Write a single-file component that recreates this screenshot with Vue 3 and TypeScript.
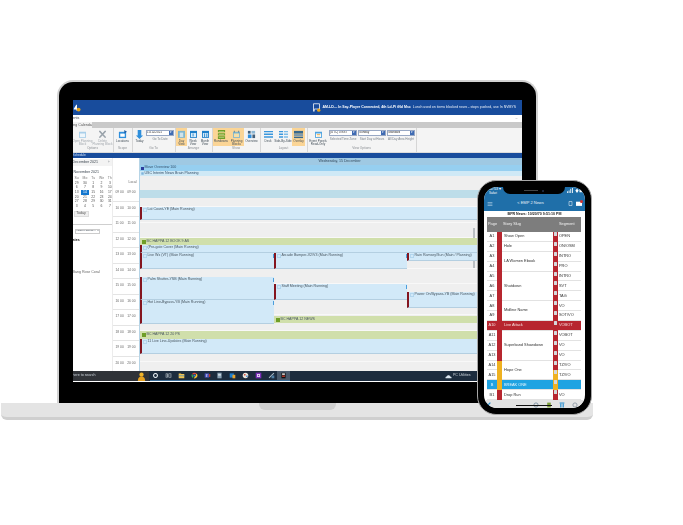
<template>
  <div class="stage">
    <div class="laptop">
      <div class="lid">
        <div class="screen">
          <header class="topbar">
            <span class="logo">
              <svg viewBox="0 0 10 10" width="8" height="8"><path d="M1 6 4 1h1v5h1v1H5v1H4V7H1z" fill="#fff" /><circle cx="7" cy="7" r="2.4" fill="#e8a417" /></svg>
            </span>
            <span class="notice">
              <svg viewBox="0 0 12 12" width="9" height="9"><path d="M2 1h8v7H3v3H2z" fill="none" stroke="#fff" stroke-width="1" /><circle cx="9" cy="9.5" r="2.2" fill="#e8a417" /></svg>
              <b>AM-LD— In Say-Player Connected, 4th Ld-Pi tNd Msc</b>
              <span>Lunch used on items blocked news - stops pushed, use In NVMYS</span>
            </span>
          </header>
          <div class="menubar"><span>ents</span><i>–</i></div>
          <div class="tabs"><span class="tab">ing Calendar</span></div>
          <div class="ribbon">
            <section v-for="g in ribbon" :key="g.label" class="group" :style="{ width: g.width + 'px' }">
              <div class="tools">
                <div v-for="t in g.tools" :key="t.label" class="tool" :class="{ on: t.on, off: t.off }" :style="{ width: t.width + 'px' }">
                  <svg viewBox="0 0 10 10" width="9" height="9"><path v-for="(p, i) in icons[t.icon]" :key="i" :d="p[0]" :fill="p[1]" /></svg>
                  <span>{{ t.label }}</span>
                </div>
                <div v-if="g.goto" class="goto">
                  <div class="pick"><span>15/12/2021</span><i>▾</i></div>
                  <span>Go To Date</span>
                </div>
                <template v-if="g.views">
                  <div v-for="v in viewOptions" :key="v.label" class="goto wide">
                    <div class="pick"><span>{{ v.value }}</span><i>▾</i></div>
                    <span>{{ v.label }}</span>
                  </div>
                </template>
              </div>
              <small>{{ g.label }}</small>
            </section>
          </div>
          <div class="bluebar"><span>Schedule</span></div>

          <div class="body">
            <aside class="side">
              <div class="side-title"><span>December 2021</span><i>›</i></div>
              <div class="month-name">November 2021</div>
              <div class="month">
                <span v-for="d in weekdays" :key="d" class="wd">{{ d }}</span>
                <span v-for="(d, i) in days" :key="i" :class="{ today: d === 14 }">{{ d }}</span>
              </div>
              <button class="today-btn">Today</button>
              <div class="side-line"></div>
              <div class="select"><span>main/Nova...</span><i>▾</i></div>
              <b class="side-head">ates</b>
              <span class="side-note">Bang Rose Coral</span>
            </aside>

            <div class="times">
              <div class="local">Local</div>
              <div v-for="h in hours" :key="h" class="hour"><span>{{ h }}</span><span>{{ h }}</span></div>
            </div>

            <div class="day">
              <div class="day-head">Wednesday, 15 December</div>
              <div class="allday a"><em></em>Move Overview 100</div>
              <div class="allday b"><svg viewBox="0 0 10 10" width="3" height="3"><path d="M1 1h8v8H1z" fill="#7fb4dc" /></svg>USC Interim News Brain Planning</div>
              <div class="slots">
                <div class="band" style="grid-row: 15 / 23"></div>
                <div
                  v-for="e in events"
                  :key="e.text"
                  class="event"
                  :class="{ green: e.green }"
                  :style="{ gridRow: `${e.top - 175} / ${e.bottom - 175}`, gridColumn: `${e.col} / ${e.end}` }"
                >
                  <svg v-if="e.green" viewBox="0 0 10 10" width="4" height="4"><path d="M0 0h10v10H0z" fill="#6f9e27" /></svg>
                  <svg v-else viewBox="0 0 10 10" width="4" height="4"><path d="M1 1h8v8H1z" fill="none" stroke="#7fb4dc" /></svg>
                  <span>{{ e.text }}</span>
                  <i v-if="e.flag" class="flag"></i>
                </div>
                <div v-for="m in marks" :key="m[0]" class="mark" :style="{ gridRow: `${m[0] - 175} / ${m[1] - 175}` }"></div>
              </div>
            </div>
          </div>

          <footer class="taskbar">
            <div class="search">
              <span>here to search</span>
              <svg viewBox="0 0 10 10" width="9" height="9"><circle cx="5" cy="3" r="2.4" fill="#f0b429" /><path d="M1 10c0-4 2-5 4-5s4 1 4 5z" fill="#e6a11f" /></svg>
            </div>
            <div class="task-icons">
              <span v-for="t in taskIcons" :key="t.key" class="task" :class="{ active: t.active }">
                <svg viewBox="0 0 10 10" width="7" height="7"><path v-for="(p, i) in t.paths" :key="i" :d="p[0]" :fill="p[1]" /></svg>
              </span>
            </div>
            <div class="tray">
              <svg viewBox="0 0 12 8" width="7" height="5"><path d="M1 7c-1-2 1-3 2-3 1-3 5-3 6 0 2 0 3 2 2 3z" fill="#dbe6f0" /></svg>
              <span>PC Utilities</span>
            </div>
          </footer>
        </div>
      </div>
      <div class="base"><div class="lip"></div></div>
    </div>

    <div class="phone">
      <div class="phone-screen">
        <div class="notch"><i></i><b></b></div>
        <div class="status">
          <div><span>12:53 ▾</span><small>Safari</small></div>
          <svg viewBox="0 0 18 6" width="15" height="5"><path d="M0 4h1v2H0zM2 3h1v3H2zM4 1h1v5H4zM6 0h1v6H6z" fill="#fff" /><path d="M10 3l2-2 2 2-2 3z" fill="#fff" /><path d="M15 1h3v4h-3z" fill="#fff" /></svg>
        </div>
        <div class="phone-nav">
          <svg viewBox="0 0 10 10" width="6" height="6"><path d="M1 2h8v1H1zM1 4.500h8v1H1zM1 7h8v1H1z" fill="#cfe3f2" /></svg>
          <span>&lt; EMP 2 News</span>
          <svg viewBox="0 0 10 10" width="5" height="5"><path d="M2 1h6v8H2z" fill="none" stroke="#fff" /></svg>
          <span class="mail">
            <svg viewBox="0 0 10 8" width="6" height="5"><path d="M0 1h10v7H0z" fill="#fff" /></svg>
            <i></i>
          </span>
        </div>
        <div class="stamp">BPR News: 10/20/70 9:51:10 PM</div>
        <div class="rundown">
          <div class="th">Page</div>
          <div class="th story-head">Story Slug</div>
          <div class="th seg-head">Segment</div>
          <template v-for="r in rows" :key="r.page">
            <div class="cell page" :class="r.tone">{{ r.page }}</div>
            <template v-if="r.story !== undefined">
              <div class="cell bar" :class="[r.tone, r.bar]" :style="r.storySpan ? { gridRow: 'span ' + r.storySpan } : undefined"></div>
              <div class="cell story" :class="r.tone" :style="r.storySpan ? { gridRow: 'span ' + r.storySpan } : undefined">{{ r.story }}</div>
            </template>
            <div class="cell bar second" :class="[r.tone, r.bar2]"><i></i></div>
            <div class="cell seg" :class="r.tone">{{ r.seg }}</div>
          </template>
        </div>
        <div class="phone-tools">
          <svg viewBox="0 0 10 10" width="6" height="6"><path d="M1 1l8 8M9 1l-8 8" stroke="#2a8fd0" stroke-width="2" /></svg>
          <span class="home"></span>
          <svg viewBox="0 0 10 10" width="6" height="6"><circle cx="5" cy="5" r="3.500" fill="none" stroke="#7b8fa0" stroke-width="1.500" /></svg>
          <svg viewBox="0 0 10 10" width="6" height="6"><path d="M2 1h6v8H2z" fill="#7da03a" /></svg>
          <svg viewBox="0 0 10 10" width="6" height="6"><path d="M1 1h8v1.500H1zM2 3h2v6H2zM6 3h2v6H6z" fill="#2a8fd0" /></svg>
          <svg viewBox="0 0 10 10" width="6" height="6"><circle cx="5" cy="5" r="3.500" fill="none" stroke="#8d9aa5" stroke-width="1.500" /></svg>
        </div>
      </div>
    </div>
  </div>
</template>

<script setup lang="ts">
type Path = [string, string]

interface Tool {
  label: string
  icon: string
  width: number
  on?: boolean
  off?: boolean
}

interface RibbonGroup {
  label: string
  width: number
  tools: Tool[]
  goto?: boolean
  views?: boolean
}

interface CalEvent {
  text: string
  top: number
  bottom: number
  col: number
  end: number
  green?: boolean
  flag?: boolean
}

interface Row {
  page: string
  story?: string
  storySpan?: number
  seg: string
  tone?: string
  bar?: string
  bar2?: string
}

const icons: Record<string, Path[]> = {
  cal: [['M1 2h8v7H1z', '#4ea3e0'], ['M2 4h6v4H2z', '#fff'], ['M2 1h1v2H2zM7 1h1v2H7z', '#1d5fa8']],
  calOff: [['M1 2h8v7H1z', '#a9cfe9'], ['M2 4h6v4H2z', '#eef6fb']],
  cross: [['M1 1h1.500L9 8v1H7.500L1 2zM9 1v1L2.500 9H1V8L7.500 1z', '#9aa3ab']],
  loc: [['M1 2h8v7H1z', '#2f8fdc'], ['M2.500 4h5v3.500h-5z', '#fff'], ['M7 0l3 2-3 2z', '#1d5fa8']],
  today: [['M3 0h4v6h2L5 10 1 6h2z', '#2f8fdc']],
  dayView: [['M1 1h8v8H1z', '#7fb6cf'], ['M3 3h4v5H3z', '#cfe3ea']],
  weekView: [['M1 1h8v8H1z', '#1e7fc9'], ['M2 3.500h6V8H2z', '#d9eefb'], ['M4 4h1v3.500H4z', '#1e7fc9']],
  monthView: [['M1 1h8v8H1z', '#1e7fc9'], ['M2 3.500h6V8H2z', '#d9eefb'], ['M3.500 4h1v4h-1zM6 4h1v4H6z', '#1e7fc9']],
  rundown: [['M1 0h8v2.500H1zM1 3.500h8V6H1zM1 7h8v3H1z', '#6f9e27'], ['M2 1h6v.6H2zM2 4.500h6v.6H2zM2 8h6v.6H2z', '#d7e6a7']],
  block: [['M1 2h8v7H1z', '#7fb6cf'], ['M2 4h6v4H2z', '#f5dfa8'], ['M2 1h1v2H2zM7 1h1v2H7z', '#5c7f95']],
  overview: [['M1 1h3v3H1z', '#44607a'], ['M5 1h4v3H5z', '#8db7d4'], ['M1 5h4v4H1z', '#2f8fdc'], ['M6 5h3v4H6z', '#44607a']],
  desk: [['M0 1h10v1.500H0zM0 4h10v1.500H0zM0 7h10v1.500H0z', '#3a97dd']],
  side: [['M0 1h4.500v1.500H0zM0 4h4.500v1.500H0zM0 7h4.500v1.500H0z', '#3a97dd'], ['M5.500 1H10v1.500H5.500zM5.500 4H10v1.500H5.500zM5.500 7H10v1.500H5.500z', '#7cbce9']],
  overlay: [['M0 1h10v3H0z', '#38688c'], ['M0 4.500h10V7H0z', '#7c99ad'], ['M0 7.500h10V9H0z', '#38688c']],
  panel: [['M1 2h8v7H1z', '#4ea3e0'], ['M2 4h6v4H2z', '#fff'], ['M3 5h4v.8H3zM3 6.500h4v.8H3z', '#e9a83a']]
}

const ribbon: RibbonGroup[] = [
  { label: 'Options', width: 41, tools: [
    { label: 'Open Planning Block', icon: 'calOff', width: 20, off: true },
    { label: 'Delete Planning Block', icon: 'cross', width: 20, off: true }
  ] },
  { label: 'Scope', width: 19, tools: [{ label: 'Locations', icon: 'loc', width: 17 }] },
  { label: 'Go To', width: 43, goto: true, tools: [{ label: 'Today', icon: 'today', width: 13 }] },
  { label: 'Arrange', width: 37, tools: [
    { label: 'Day View', icon: 'dayView', width: 11, on: true },
    { label: 'Week View', icon: 'weekView', width: 12 },
    { label: 'Month View', icon: 'monthView', width: 12 }
  ] },
  { label: 'Show', width: 48, tools: [
    { label: 'Rundowns', icon: 'rundown', width: 16, on: true },
    { label: 'Planning Blocks', icon: 'block', width: 15, on: true },
    { label: 'Overview', icon: 'overview', width: 15 }
  ] },
  { label: 'Layout', width: 47, tools: [
    { label: 'Desk', icon: 'desk', width: 12 },
    { label: 'Side-By-Side', icon: 'side', width: 18 },
    { label: 'Overlay', icon: 'overlay', width: 13, on: true }
  ] },
  { label: 'View Options', width: 109, views: true, tools: [{ label: 'Event Panels Read-Only', icon: 'panel', width: 20 }] }
]

const viewOptions = [
  { label: 'Selected Time Zone', value: '(UTC) 0 BST' },
  { label: 'Start Day at Hours', value: 'Sunday' },
  { label: 'All Day Area Height', value: 'Standard' }
]

const weekdays = ['Su', 'Mo', 'Tu', 'We', 'Th']
const days = [29, 30, 1, 2, 3, 6, 7, 8, 9, 10, 13, 14, 15, 16, 17, 20, 21, 22, 23, 24, 27, 28, 29, 30, 31, 3, 4, 5, 6, 7]

const hours = ['09 00', '10 00', '11 00', '12 00', '13 00', '14 00', '15 00', '16 00', '17 00', '18 00', '19 00', '20 00']

const events: CalEvent[] = [
  { text: 'Lat Count-YE (Main Running)', top: 207, bottom: 220, col: 1, end: 5 },
  { text: 'BC HAPPA 12 BOOK 9 AS', top: 238, bottom: 245, col: 1, end: 5, green: true },
  { text: '(Pre-gate Cover (Main Running)', top: 245, bottom: 253, col: 1, end: 5 },
  { text: 'Live Wx (VT) (Main Running)', top: 253, bottom: 269, col: 1, end: 2, flag: true },
  { text: 'Arcade Bumper-V2/V3 (Main Running)', top: 253, bottom: 269, col: 2, end: 3, flag: true },
  { text: 'Rain Ramsey/Sun (Main / Planning)', top: 253, bottom: 261, col: 3, end: 5 },
  { text: 'Palm Shutter-YSB (Main Running)', top: 277, bottom: 300, col: 1, end: 2, flag: true },
  { text: 'Hot Line-Bypass-YB (Main Running)', top: 300, bottom: 324, col: 1, end: 2, flag: true },
  { text: 'Staff Meeting (Main Running)', top: 284, bottom: 300, col: 2, end: 3, flag: true },
  { text: 'Power On/Bypass-YB (Main Running)', top: 292, bottom: 308, col: 3, end: 5 },
  { text: 'BC HAPPA 12 NEWS', top: 316, bottom: 323, col: 2, end: 5, green: true },
  { text: 'BC HAPPA 12 20 PS', top: 331, bottom: 339, col: 1, end: 5, green: true },
  { text: '11 Live Line-Updates (Main Running)', top: 339, bottom: 354, col: 1, end: 5 }
]

const marks: [number, number][] = [[210, 219], [228, 248], [255, 268]]

const rows: Row[] = [
  { page: 'A1', story: 'Show Open', seg: 'OPEN', bar: 'red', bar2: 'red' },
  { page: 'A2', story: 'Hole', seg: 'ON/OSM', bar: 'red', bar2: 'red' },
  { page: 'A3', story: 'LA Women Ebook', storySpan: 2, seg: 'INTRO', bar: 'red', bar2: 'red' },
  { page: 'A4', seg: 'PRO', bar2: 'red' },
  { page: 'A5', story: 'Shutdown', storySpan: 3, seg: 'INTRO', bar: 'red', bar2: 'red' },
  { page: 'A6', seg: 'SVT', bar2: 'red' },
  { page: 'A7', seg: 'TAG', bar2: 'red' },
  { page: 'A8', story: 'Midline Name', storySpan: 2, seg: 'VO', bar: 'red', bar2: 'red' },
  { page: 'A9', seg: 'SOT/VO', bar2: 'red' },
  { page: 'A10', story: 'Live Attack', seg: 'VOBOT', tone: 'alert', bar: 'red', bar2: 'red' },
  { page: 'A11', story: 'Superband Showdown', storySpan: 3, seg: 'VOBOT', bar: 'red', bar2: 'red' },
  { page: 'A12', seg: 'VO', bar2: 'red' },
  { page: 'A13', seg: 'VO', bar2: 'red' },
  { page: 'A14', story: 'Hope One', storySpan: 2, seg: 'TZ/VO', bar: 'yellow', bar2: 'red' },
  { page: 'A15', seg: 'TZ/VO', bar2: 'yellow' },
  { page: 'B', story: 'BREAK ONE', seg: '', tone: 'blue', bar: 'yellow', bar2: 'yellow' },
  { page: 'B1', story: 'Drop Run', seg: 'VO', bar: 'red', bar2: 'red' }
]

const taskIcons = [
  { key: 'cortana', paths: [['M5 1.500a3.500 3.500 0 1 0 .01 0zM5 3a2 2 0 1 1-.01 0z', '#e8eef3']] as Path[] },
  { key: 'view', paths: [['M1 2h3v6H1zM5 2h4v6H5z', '#b9c4cc'], ['M2 3h1v4H2zM6 3h2v4H6z', '#1e2c3d']] as Path[] },
  { key: 'files', paths: [['M1 2h3l1 1h4v6H1z', '#f2c14e'], ['M1 5h8v1H1z', '#3b8fd0']] as Path[] },
  { key: 'chrome', paths: [['M5 1a4 4 0 0 1 3.500 2H5a2 2 0 0 0-2 1L1.500 3A4 4 0 0 1 5 1z', '#d9453a'], ['M1.500 3 3.500 6.500 2.800 8.400A4 4 0 0 1 1.500 3z', '#36a853'], ['M8.500 3A4 4 0 0 1 4 9l2-3a2 2 0 0 0 .500-3z', '#f3c02c'], ['M5 3.500a1.500 1.500 0 1 0 .01 0z', '#3a7ee6']] as Path[] },
  { key: 'teams', paths: [['M1 2h6v6H1z', '#4b53bc'], ['M7 3h2v4H7z', '#c0392b'], ['M3 3.500h2v.8H4.400V7h-.8V4.300H3z', '#fff']] as Path[] },
  { key: 'outlook', paths: [['M2 1h6v8H2z', '#8aa2b5'], ['M3 3h4v.8H3zM3 5h4v.8H3z', '#e4ebf1']] as Path[] },
  { key: 'mail', paths: [['M1 2h6v6H1z', '#1d7fd0'], ['M5 4h4v5H5z', '#e7a32c']] as Path[] },
  { key: 'paint', paths: [['M5 1a4 4 0 1 0 .01 0z', '#e8e4da'], ['M3 3h2v2H3z', '#d0463b'], ['M6 5h2v2H6z', '#3a85d6']] as Path[] },
  { key: 'onenote', paths: [['M1 1h8v8H1z', '#7a2fb8'], ['M3 3h4v4H3z', '#fff'], ['M4 4h2v2H4z', '#7a2fb8']] as Path[] },
  { key: 'tool', paths: [['M1 8 6 3l2-2 1 1-2 2-5 5z', '#a9bac7'], ['M5 5h4v4H5z', '#4f7ea3']] as Path[] },
  { key: 'app', active: true, paths: [['M2 1h6v8H2z', '#111'], ['M3 2h4v2H3z', '#f2f2f2'], ['M3 5h4v2H3z', '#c0392b']] as Path[] }
]
</script>

<style>
html,
body {
  margin: 0;
  background: #fff;
}
</style>

<style scoped>
.stage {
  position: relative;
  width: 683px;
  height: 525px;
  padding-top: 80px;
  box-sizing: border-box;
  overflow: hidden;
  font-family: "Liberation Sans", Arial, sans-serif;
  font-size: 3.6px;
  line-height: 1.1;
  color: #3c4650;
}

.laptop {
  margin-left: 1px;
  width: 592px;
  display: flex;
  flex-direction: column;
  align-items: center;
}

.lid {
  width: 481px;
  box-sizing: border-box;
  padding: 18px 14px 21px;
  background: #000;
  border: 2px solid #d2d2d2;
  border-bottom: 0;
  border-radius: 16px 16px 0 0;
}

.screen {
  height: 282px;
  display: flex;
  flex-direction: column;
  overflow: hidden;
  background: #fff;
  filter: blur(0.25px);
}

.topbar {
  height: 15px;
  flex: none;
  display: flex;
  align-items: center;
  background: #184c9c;
  color: #fff;
  font-size: 3.5px;
  white-space: nowrap;
  overflow: hidden;
}

.logo {
  margin-top: 3px;
}

.notice {
  margin-left: 231px;
  display: flex;
  align-items: center;
  gap: 2px;
}

.notice span {
  opacity: 0.9;
}

.menubar {
  height: 7px;
  flex: none;
  display: flex;
  align-items: center;
  justify-content: space-between;
  padding-right: 4px;
}

.menubar i {
  font-style: normal;
  color: #777;
}

.tabs {
  height: 6px;
  flex: none;
  background: #c9c9c9;
}

.tab {
  display: inline-block;
  width: 19px;
  height: 6px;
  line-height: 6px;
  background: #f1f1f1;
  color: #555;
  white-space: nowrap;
  overflow: hidden;
}

.ribbon {
  height: 25px;
  flex: none;
  display: flex;
  background: #f4f4f4;
  border-bottom: 1px solid #dcdcdc;
  box-sizing: border-box;
}

.group {
  flex: none;
  box-sizing: border-box;
  height: 24px;
  display: flex;
  flex-direction: column;
  align-items: center;
  border-right: 1px solid #d6d6d6;
}

.group small {
  font-size: 3.2px;
  color: #8b8f94;
  margin-top: auto;
  padding-bottom: 1px;
}

.tools {
  display: flex;
  justify-content: center;
  height: 18px;
}

.tool {
  height: 18px;
  flex: none;
  display: flex;
  flex-direction: column;
  align-items: center;
  gap: 1px;
  padding-top: 2px;
  box-sizing: border-box;
  font-size: 3px;
  line-height: 1.05;
  text-align: center;
  color: #44505a;
}

.tool.off {
  color: #a2a8ae;
}

.tool.on {
  background: #fbd596;
}

.goto {
  width: 28px;
  display: flex;
  flex-direction: column;
  align-items: center;
  gap: 2px;
  padding-top: 2px;
  font-size: 3px;
  color: #7a838b;
  white-space: nowrap;
}

.goto.wide {
  width: 28px;
  margin-left: 1px;
}

.pick {
  width: 100%;
  height: 6px;
  box-sizing: border-box;
  display: flex;
  justify-content: space-between;
  align-items: center;
  background: #fff;
  border: 1px solid #98a8c4;
  color: #333;
  white-space: nowrap;
  overflow: hidden;
}

.pick i {
  width: 4px;
  height: 4px;
  flex: none;
  background: #3f6bb3;
  color: #fff;
  font-style: normal;
  font-size: 3px;
  text-align: center;
}

.bluebar {
  height: 5px;
  flex: none;
  background: #184c9c;
  color: #cfe0f5;
  line-height: 5px;
  font-size: 3.2px;
}

.body {
  height: 213px;
  flex: none;
  display: flex;
  overflow: hidden;
}

.side {
  width: 40px;
  flex: none;
  display: flex;
  flex-direction: column;
  align-items: flex-start;
  white-space: nowrap;
  border-right: 1px solid #ececec;
  box-sizing: border-box;
}

.side-title {
  height: 7px;
  width: 100%;
  margin-top: 1px;
  display: flex;
  justify-content: space-between;
  align-items: center;
  padding-right: 2px;
  box-sizing: border-box;
  background: #f3f3f3;
}

.side-title i {
  font-style: normal;
}

.month-name {
  margin-top: 5px;
  margin-left: 1px;
}

.month {
  margin-top: 1px;
  display: grid;
  grid-template-columns: repeat(5, 8.300px);
  grid-auto-rows: 4.700px;
  line-height: 4.700px;
  font-size: 3.4px;
  text-align: center;
  color: #555;
}

.wd {
  color: #777;
}

.today {
  background: #1477cf;
  color: #fff;
}

.today-btn {
  margin: 2px 0 0 1px;
  width: 15px;
  height: 6px;
  padding: 0;
  border: 1px solid #ddd;
  background: #efefef;
  font: inherit;
  color: #555;
}

.side-line {
  width: 100%;
  height: 1px;
  margin-top: 7px;
  background: #cfcfcf;
}

.select {
  margin: 4px 0 0 2px;
  width: 25px;
  height: 5px;
  box-sizing: border-box;
  border: 1px solid #ccc;
  display: flex;
  justify-content: space-between;
  align-items: center;
  overflow: hidden;
}

.select i {
  font-style: normal;
  flex: none;
}

.side-head {
  margin-top: 5px;
  color: #222;
}

.side-note {
  margin-top: 28px;
  color: #666;
}

.times {
  width: 27px;
  flex: none;
  border-right: 1px solid #b6d4e6;
  box-sizing: border-box;
  font-size: 3.3px;
  color: #666;
}

.local {
  height: 28px;
  box-sizing: border-box;
  padding: 0 2px 1px 0;
  display: flex;
  align-items: flex-end;
  justify-content: flex-end;
}

.hour {
  height: 15.500px;
  box-sizing: border-box;
  padding: 0 3px;
  display: flex;
  justify-content: space-between;
  align-items: center;
  border-bottom: 1px solid #e4e4e4;
}

.day {
  flex: 1;
  min-width: 0;
  display: flex;
  flex-direction: column;
  background: #efefef;
}

.day-head {
  height: 7px;
  flex: none;
  line-height: 7px;
  padding-left: 18px;
  text-align: center;
  background: #9fc9e3;
  color: #34495c;
}

.allday {
  flex: none;
  display: flex;
  align-items: center;
  gap: 1px;
  padding-left: 1px;
  white-space: nowrap;
  color: #35506a;
}

.allday.a {
  height: 6px;
  background: #96cff0;
}

.allday.b {
  height: 5px;
  background: #cfe9f6;
}

.allday em {
  width: 3px;
  height: 3px;
  background: #2b3d9c;
}

.slots {
  flex: 1;
  display: grid;
  grid-template-columns: 134px 133px 68px 1fr;
  grid-template-rows: repeat(195, 1px);
  background:
    repeating-linear-gradient(to bottom, #efefef 0, #efefef 14.500px, #f8f8f8 14.500px, #f8f8f8 15.500px);
}

.band {
  grid-column: 1 / 5;
  background: #bddde9;
}

.event {
  display: flex;
  gap: 1px;
  padding: 1px 1px 0 1px;
  box-sizing: border-box;
  position: relative;
  min-width: 0;
  white-space: nowrap;
  overflow: hidden;
  background: #d2e9f8;
  border-left: 2px solid #84151f;
  border-bottom: 1px solid #b4cfe1;
  color: #46545f;
}

.event.green {
  align-items: center;
  padding-top: 0;
  background: #d0dfab;
  border-left: 0;
  border-bottom: 0;
  padding-left: 2px;
}

.flag {
  position: absolute;
  right: 0;
  top: 1px;
  width: 1px;
  height: 4px;
  background: #4a9edc;
}

.mark {
  grid-column: 3;
  justify-self: end;
  width: 2px;
  background: #b9bec2;
}

.taskbar {
  height: 10px;
  flex: none;
  margin-bottom: 1px;
  display: flex;
  align-items: center;
  background: #1c2c3e;
  color: #cfd6dd;
  white-space: nowrap;
}

.search {
  width: 76px;
  height: 100%;
  flex: none;
  display: flex;
  align-items: center;
  justify-content: space-between;
  padding-right: 3px;
  box-sizing: border-box;
  background: #303338;
}

.task-icons {
  margin-left: 1px;
  display: flex;
}

.task {
  width: 12.800px;
  height: 10px;
  display: flex;
  align-items: center;
  justify-content: center;
  box-sizing: border-box;
  border-bottom: 1px solid #3a6d98;
}

.task.active {
  background: #48586a;
}

.tray {
  margin-left: auto;
  padding-right: 51px;
  display: flex;
  align-items: center;
  gap: 1px;
}

.base {
  width: 592px;
  height: 17px;
  box-sizing: border-box;
  display: flex;
  justify-content: center;
  background: #e4e4e4;
  border-bottom: 3px solid #cfcfcf;
  border-radius: 0 0 6px 6px;
}

.lip {
  width: 77px;
  height: 7px;
  background: #cfcfcf;
  border-radius: 0 0 6px 6px;
}

.phone {
  position: absolute;
  left: 477px;
  top: 180px;
  width: 115px;
  height: 235px;
  box-sizing: border-box;
  padding: 6px;
  background: #000;
  border: 1px solid #a8a8a8;
  border-radius: 19px;
}

.phone-screen {
  position: relative;
  height: 100%;
  display: flex;
  flex-direction: column;
  overflow: hidden;
  background: #fff;
  border-radius: 13px;
  filter: blur(0.2px);
}

.notch {
  position: absolute;
  left: 19px;
  top: 0;
  width: 62px;
  height: 7px;
  display: flex;
  align-items: center;
  justify-content: center;
  gap: 4px;
  background: #000;
  border-radius: 0 0 7px 7px;
}

.notch i {
  width: 14px;
  height: 1px;
  background: #444;
}

.notch b {
  width: 2px;
  height: 2px;
  background: #26324a;
  border-radius: 50%;
}

.status {
  height: 8px;
  flex: none;
  padding: 1px 3px 0 5px;
  display: flex;
  justify-content: space-between;
  background: #1f6fa9;
  color: #fff;
}

.status small {
  display: block;
  font-size: 3px;
}

.phone-nav {
  height: 15px;
  flex: none;
  padding: 0 3px;
  display: flex;
  align-items: center;
  gap: 3px;
  background: #1f6fa9;
  color: #eaf3fa;
  font-size: 4px;
  box-sizing: border-box;
}

.phone-nav > span:nth-of-type(1) {
  flex: 1;
  text-align: center;
}

.mail {
  position: relative;
  display: flex;
}

.mail i {
  position: absolute;
  right: -1px;
  top: -1px;
  width: 3px;
  height: 3px;
  border-radius: 50%;
  background: #d32f2f;
}

.stamp {
  height: 6px;
  flex: none;
  line-height: 6px;
  text-align: center;
  font-size: 3.600px;
  color: #222;
  font-weight: 700;
}

.rundown {
  flex: none;
  margin: 0 4px 0 3px;
  display: grid;
  grid-template-columns: 10px 5px 51px 5px 23px;
  grid-template-rows: 15px;
  grid-auto-rows: 9.900px;
  font-size: 3.900px;
  color: #333;
}

.th {
  display: flex;
  align-items: center;
  background: #7d7d7d;
  color: #f2f2f2;
  padding-left: 1px;
  white-space: nowrap;
}

.story-head {
  grid-column: 2 / 5;
  padding-left: 6px;
}

.cell {
  display: flex;
  align-items: center;
  min-width: 0;
  white-space: nowrap;
  overflow: hidden;
  box-sizing: border-box;
  border-bottom: 1px solid #e2e2e2;
}

.page {
  justify-content: center;
}

.story {
  padding-left: 2px;
}

.seg {
  padding-left: 1px;
}

.bar {
  border-bottom: 0;
}

.bar.red {
  background: #b7262f;
}

.bar.yellow {
  background: #efb120;
}

.second {
  align-items: flex-start;
  justify-content: center;
}

.second i {
  width: 3px;
  height: 4px;
  background: #d5d8dc;
  border-radius: 0.500px;
}

.alert {
  background: #b7262f;
  color: #f6dcdc;
}

.blue {
  background: #1fa3e2;
  color: #e8f6fd;
}

.phone-tools {
  margin-top: auto;
  height: 9px;
  flex: none;
  position: relative;
  display: flex;
  align-items: center;
  gap: 7px;
  padding: 0 1px;
  background: #e2e2e2;
}

.phone-tools svg:nth-of-type(2) {
  margin-left: 35px;
}

.home {
  position: absolute;
  left: 32px;
  top: 5px;
  width: 36px;
  height: 1px;
  background: #111;
}
</style>
